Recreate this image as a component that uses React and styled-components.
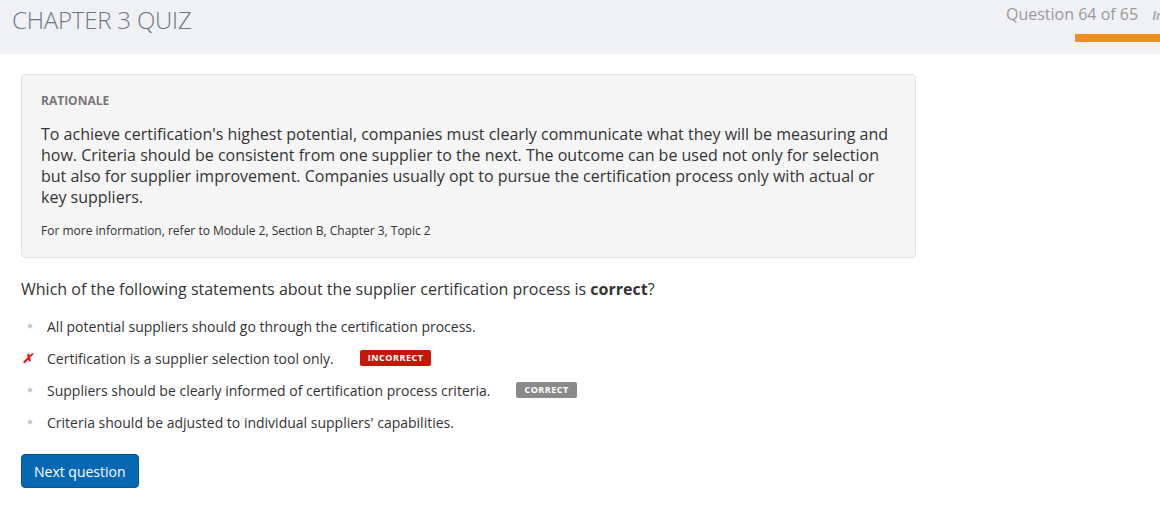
import styled, { createGlobalStyle } from 'styled-components';

const GlobalStyle = createGlobalStyle`
  body {
    margin: 0;
    background: #fff;
    font-family: "Open Sans", "Noto Sans", sans-serif;
    color: #333;
  }
`;

const Header = styled.header`
  height: 54px;
  background: #f0f1f5;
  display: flex;
  justify-content: space-between;
  overflow: hidden;
  padding-left: 12px;
`;

const Title = styled.h1`
  margin: 0;
  font-size: 24px;
  font-weight: 300;
  line-height: 40px;
  color: #6e7680;
  letter-spacing: -0.2px;
`;

const Progress = styled.div`
  display: flex;
  flex-direction: column;
  margin-right: -65px;
  padding-top: 4px;
`;

const ProgressRow = styled.div`
  display: flex;
  align-items: baseline;
  gap: 14px;
  white-space: nowrap;
  font-size: 16px;
  line-height: 20px;
  color: #999;
`;

const Extra = styled.span`
  font-style: italic;
  font-weight: 700;
  font-size: 12px;
  color: #aaa;
`;

const Bar = styled.div`
  margin-top: 8px;
  margin-left: 69px;
  height: 8px;
  width: 150px;
  background: #f28d1f;
  border-radius: 1px;
`;

const Main = styled.main`
  padding: 20px 21px;
`;

const Card = styled.section`
  width: 855px;
  background: #f5f5f5;
  border: 1px solid #e3e3e3;
  border-radius: 4px;
  padding: 17px 19px 18px;
`;

const Label = styled.div`
  font-size: 12px;
  font-weight: 700;
  line-height: 18px;
  color: #777;
`;

const Body = styled.p`
  margin: 14px 0 0;
  font-size: 16px;
  line-height: 21px;
  color: #333;
`;

const Note = styled.p`
  margin: 14px 0 0;
  font-size: 12px;
  line-height: 17px;
  color: #333;
`;

const Question = styled.p`
  margin: 20px 0 0;
  font-size: 16px;
  line-height: 22px;
  color: #333;
`;

const Options = styled.ul`
  list-style: none;
  margin: 10px 0 0;
  padding: 0;
`;

const Option = styled.li`
  display: flex;
  align-items: center;
  height: 32px;
  font-size: 14px;
  color: #333;
`;

const Marker = styled.span`
  width: 26px;
  flex: none;
  display: flex;
  align-items: center;
`;

const Dot = styled.span`
  width: 4px;
  height: 4px;
  margin-left: 7px;
  background: #c8c8c8;
  transform: rotate(45deg);
`;

const Cross = styled.span`
  color: #e8141b;
  font-weight: 700;
  font-style: italic;
  font-size: 13px;
  margin-left: 1px;
`;

const Badge = styled.span`
  margin-left: 26px;
  height: 16px;
  padding: 0 8px;
  border-radius: 2px;
  background: ${({ $tone }) => ($tone === 'bad' ? '#c41708' : '#8a8a8a')};
  color: #fff;
  font-size: 9px;
  font-weight: 700;
  letter-spacing: 0.5px;
  line-height: 16px;
`;

const NextButton = styled.button`
  margin-top: 16px;
  height: 34px;
  padding: 0 12px;
  background: #0668b3;
  border: 1px solid #04578f;
  border-radius: 4px;
  color: #fff;
  font-family: inherit;
  font-size: 14px;
  cursor: pointer;
`;

const options = [
  { text: 'All potential suppliers should go through the certification process.' },
  { text: 'Certification is a supplier selection tool only.', wrong: true, badge: 'INCORRECT' },
  { text: 'Suppliers should be clearly informed of certification process criteria.', badge: 'CORRECT' },
  { text: "Criteria should be adjusted to individual suppliers' capabilities." },
];

export default function App() {
  return (
    <>
      <GlobalStyle />
      <Header>
        <Title>CHAPTER 3 QUIZ</Title>
        <Progress>
          <ProgressRow>
            <span>Question 64 of 65</span>
            <Extra>Info</Extra>
          </ProgressRow>
          <Bar />
        </Progress>
      </Header>
      <Main>
        <Card>
          <Label>RATIONALE</Label>
          <Body>
            To achieve certification's highest potential, companies must clearly communicate what they will be measuring and
            how. Criteria should be consistent from one supplier to the next. The outcome can be used not only for selection
            but also for supplier improvement. Companies usually opt to pursue the certification process only with actual or
            key suppliers.
          </Body>
          <Note>For more information, refer to Module 2, Section B, Chapter 3, Topic 2</Note>
        </Card>
        <Question>
          Which of the following statements about the supplier certification process is <strong>correct</strong>?
        </Question>
        <Options>
          {options.map((o) => (
            <Option key={o.text}>
              <Marker>{o.wrong ? <Cross>✗</Cross> : <Dot />}</Marker>
              {o.text}
              {o.badge && <Badge $tone={o.wrong ? 'bad' : 'ok'}>{o.badge}</Badge>}
            </Option>
          ))}
        </Options>
        <NextButton>Next question</NextButton>
      </Main>
    </>
  );
}
